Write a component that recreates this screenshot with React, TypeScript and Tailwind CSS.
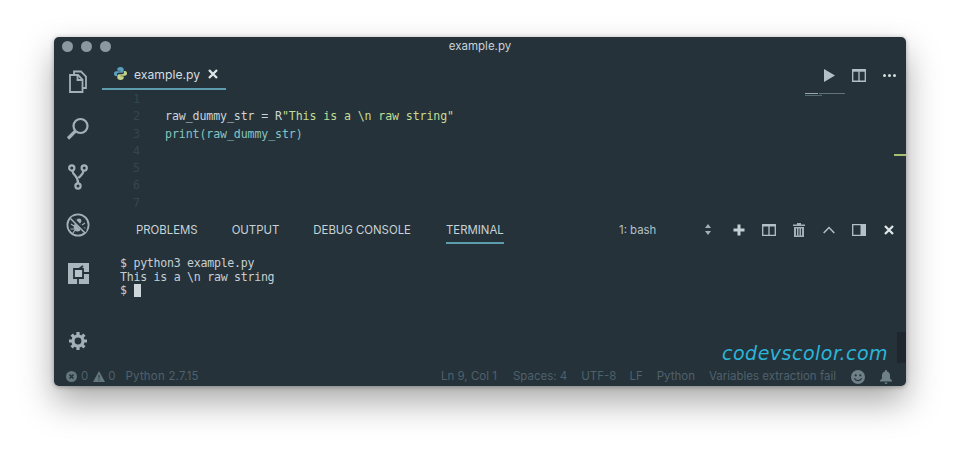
import React from 'react';

const SANS = 'font-["Inter","Noto_Sans",sans-serif]';

function Files() {
  return (
    <svg width="18" height="23" viewBox="0 0 18 23" fill="none" stroke="#a3b1b7" strokeWidth="1.800">
      <path d="M5 4V1.500h7l5 5V18h-4" />
      <path d="M1 5h8l4.500 4.500V22H1z" fill="#25323a" />
      <path d="M8.500 5v5h5" />
    </svg>
  );
}

function Search() {
  return (
    <svg width="24" height="24" viewBox="0 0 24 24" fill="none" stroke="#a3b1b7">
      <circle cx="14.500" cy="9" r="7" strokeWidth="2.200" />
      <path d="M9.500 14 2 21.500" strokeWidth="3.200" />
    </svg>
  );
}

function Branch() {
  return (
    <svg width="20" height="26" viewBox="0 0 20 26" fill="none" stroke="#a3b1b7" strokeWidth="2.200">
      <circle cx="3.800" cy="4" r="2.600" />
      <circle cx="16.200" cy="4" r="2.600" />
      <circle cx="10" cy="22" r="2.600" />
      <path d="M4.500 7c.5 5 5.500 4 5.500 12M15.500 7c-.5 4-3.500 5-5 7" />
    </svg>
  );
}

function Bug() {
  return (
    <svg width="24" height="24" viewBox="0 0 24 24" fill="none" stroke="#a3b1b7">
      <circle cx="12" cy="12" r="10.600" strokeWidth="1.800" />
      <ellipse cx="11.500" cy="14" rx="3.800" ry="4.500" fill="#a3b1b7" stroke="none" />
      <circle cx="13" cy="8" r="2.400" fill="#a3b1b7" stroke="none" />
      <path d="M5 11l3 2M4.500 16H8M7 20l2-3M19 10l-3 2M19.500 15H16M9 6l1.500 2" strokeWidth="1.200" />
      <path d="M5.500 4.500l14 14.500" stroke="#25323a" strokeWidth="3.400" />
      <path d="M4.500 5.500l14.500 14.500" strokeWidth="1.600" />
    </svg>
  );
}

function Extensions() {
  return (
    <svg width="21" height="21" viewBox="0 0 21 21">
      <path d="M0 0h21v21H0z" fill="#a9b6bb" />
      <path d="M6 6h9v9H6z" fill="#b7c3c7" stroke="#25323a" strokeWidth="1.800" />
      <path d="M15 10h6M10 15v6M11 6l4-3" stroke="#25323a" strokeWidth="1.800" fill="none" />
    </svg>
  );
}

function Gear() {
  return (
    <svg width="20" height="20" viewBox="0 0 20 20" fill="none" stroke="#a3b1b7">
      <circle cx="10" cy="10" r="5" strokeWidth="3.200" />
      <path
        d="M10 1v3M10 16v3M1 10h3M16 10h3M3.600 3.600l2.200 2.200M14.200 14.200l2.200 2.200M3.600 16.400l2.200-2.200M14.200 5.800l2.200-2.200"
        strokeWidth="3.200"
      />
    </svg>
  );
}

function PythonLogo() {
  return (
    <svg className="shrink-0" width="13" height="13" viewBox="0 0 14 14">
      <path d="M7 0C4.500 0 3.600 1 3.600 2.400V4H7v.7H2.200C.8 4.700 0 5.700 0 7.200c0 1.600.8 2.600 2 2.600h1.200V8.300C3.200 7 4.200 6.300 5.300 6.300h3.300c1 0 1.800-.8 1.800-1.800V2.400C10.400 1 9.200 0 7 0z" fill="#5a9fbf" />
      <path d="M7 14c2.500 0 3.400-1 3.400-2.400V10H7v-.7h4.800c1.400 0 2.200-1 2.200-2.500 0-1.600-.8-2.600-2-2.600h-1.200v1.500c0 1.300-1 2-2.100 2H5.400c-1 0-1.800.8-1.800 1.800v2.100C3.600 13 4.800 14 7 14z" fill="#c5d28a" />
    </svg>
  );
}

function SplitIcon({ h = 12 }: { h?: number }) {
  return (
    <svg className="shrink-0" width="14" height={h} viewBox="0 0 14 12" preserveAspectRatio="none" fill="none" stroke="#b4c0c5">
      <path d="M.7.7h12.600v10.600H.7zM7 2v9.500" strokeWidth="1.300" />
      <path d="M.7 1.500h12.600" strokeWidth="2" />
    </svg>
  );
}

function Plus() {
  return (
    <svg width="12" height="12" viewBox="0 0 12 12" stroke="#c5d0d4" strokeWidth="3">
      <path d="M6 .5v11M.5 6h11" />
    </svg>
  );
}

function Trash() {
  return (
    <svg width="12" height="14" viewBox="0 0 12 14" fill="#a3b1b7">
      <path d="M4 0h4v1.500h4V3H0V1.500h4zM1 4h10v10H1z" />
      <path d="M3.500 5.500v7M6 5.500v7M8.500 5.500v7" stroke="#25323a" />
    </svg>
  );
}

function Chevron() {
  return (
    <svg width="12" height="8" viewBox="0 0 12 8" fill="none" stroke="#b4c0c5" strokeWidth="1.500">
      <path d="M.7 7 6 1.500 11.300 7" />
    </svg>
  );
}

function PanelIcon() {
  return (
    <svg width="14" height="12" viewBox="0 0 14 12">
      <path d="M.7.7h12.600v10.600H.7z" fill="none" stroke="#b4c0c5" strokeWidth="1.300" />
      <path d="M8.500 0H14v12H8.500z" fill="#b4c0c5" />
    </svg>
  );
}

function Close() {
  return (
    <svg className="shrink-0" width="10" height="10" viewBox="0 0 10 10" stroke="#dfe6e8" strokeWidth="2.300">
      <path d="M1 1l8 8M9 1l-8 8" />
    </svg>
  );
}

function ErrorIcon() {
  return (
    <svg width="11" height="11" viewBox="0 0 11 11">
      <circle cx="5.500" cy="5.500" r="5.500" fill="#64767e" />
      <path d="M3.500 3.500l4 4M7.500 3.500l-4 4" stroke="#25323a" strokeWidth="1.500" />
    </svg>
  );
}

function WarnIcon() {
  return (
    <svg width="12" height="11" viewBox="0 0 12 11">
      <path d="M6 0l6 11H0z" fill="#64767e" />
      <path d="M6 4v3.500M6 8.500v1.200" stroke="#25323a" />
    </svg>
  );
}

function Smile() {
  return (
    <svg width="14" height="14" viewBox="0 0 14 14">
      <circle cx="7" cy="7" r="7" fill="#6f8088" />
      <circle cx="4.700" cy="5.300" r="1.100" fill="#25323a" />
      <circle cx="9.300" cy="5.300" r="1.100" fill="#25323a" />
      <path d="M3.300 8.300c1.500 3 5.900 3 7.400 0" fill="none" stroke="#25323a" strokeWidth="1.200" />
    </svg>
  );
}

function Bell() {
  return (
    <svg width="12" height="14" viewBox="0 0 12 14" fill="#6f8088">
      <path d="M6 0c.6 0 1 .4 1 1v.6c2 .5 3 2 3 4v3l2 2v.9H0v-.9l2-2v-3c0-2 1-3.500 3-4V1c0-.6.4-1 1-1zM4.500 12.500h3C7.500 13.400 6.800 14 6 14s-1.500-.6-1.500-1.500z" />
    </svg>
  );
}

const ACTIVITY = [Files, Search, Branch, Bug, Extensions];
const PANEL_TABS = [
  { label: 'PROBLEMS', gap: 'mr-[34px]' },
  { label: 'OUTPUT', gap: 'mr-[34px]' },
  { label: 'DEBUG CONSOLE', gap: 'mr-[35px]' },
];

export default function App() {
  return (
    <div className="w-[960px] h-[457px] overflow-hidden bg-white pt-[37px] pl-[54px]">
      <div className="relative w-[852px] h-[349px] flex flex-col rounded-[5px] bg-[#25323a] shadow-[0_16px_34px_rgba(0,0,0,0.34),0_1px_5px_rgba(0,0,0,0.3)]">
        {/* Title bar */}
        <div className="relative h-5 shrink-0 flex items-center justify-center">
          <div className="absolute left-[8px] top-[4px] flex gap-2">
            <span className="w-[11px] h-[11px] rounded-full bg-[#8b989e]" />
            <span className="w-[11px] h-[11px] rounded-full bg-[#8b989e]" />
            <span className="w-[11px] h-[11px] rounded-full bg-[#8b989e]" />
          </div>
          <span className={`${SANS} text-[11.500px] text-[#c9d2d6]`}>example.py</span>
        </div>

        <div className="flex flex-1 min-h-0">
          {/* Activity bar */}
          <div className="w-12 shrink-0 flex flex-col pb-[1px]">
            {ACTIVITY.map((Icon, i) => (
              <div key={i} className="h-12 flex items-center justify-center">
                <Icon />
              </div>
            ))}
            <div className="mt-auto h-12 flex items-center justify-center">
              <Gear />
            </div>
          </div>

          <div className="flex-1 min-w-0 flex flex-col">
            {/* Tabs */}
            <div className="h-[33px] shrink-0 flex items-stretch justify-between">
              <div className="w-[124px] flex items-center border-b-2 border-[#5d9cad] pl-[12px] pt-[2px]">
                <PythonLogo />
                <span className={`${SANS} ml-[7px] mt-[3px] text-[12.200px] text-[#d5dde0]`}>example.py</span>
                <span className="ml-[8px] flex"><Close /></span>
              </div>
              <div className="flex items-center gap-[17px] pr-[9px] pt-[3px]">
                <svg width="12" height="13" viewBox="0 0 12 13" fill="#b4c0c5">
                  <path d="M1 0l11 6.500L1 13z" />
                </svg>
                <SplitIcon h={13} />
                <div className="flex gap-[2px] w-[14px]">
                  <span className="w-[3px] h-[3px] rounded-full bg-[#d5dde0]" />
                  <span className="w-[3px] h-[3px] rounded-full bg-[#d5dde0]" />
                  <span className="w-[3px] h-[3px] rounded-full bg-[#d5dde0]" />
                </div>
              </div>
            </div>

            {/* Editor */}
            <div className='relative h-[121px] shrink-0 pt-[1px] font-["DejaVu_Sans_Mono",monospace] text-[11.600px] tracking-[-0.1px] leading-[17.300px]'>
              {[1, 2, 3, 4, 5, 6, 7].map((n) => (
                <div key={n} className="flex whitespace-pre">
                  <span className="w-[63px] pl-[31px] text-[#37464e]">{n}</span>
                  {n === 2 && (
                    <span className="text-[#cbd5d9]">
                      raw_dummy_str = R<span className="text-[#c3dd95]">"This is a \n raw string"</span>
                    </span>
                  )}
                  {n === 3 && <span className="text-[#86c4c2]">print(raw_dummy_str)</span>}
                </div>
              ))}
              {/* Minimap */}
              <div className="absolute left-[703px] top-[3px] flex flex-col gap-[1px]">
                <div className="flex gap-[1px]">
                  <span className="w-[13px] h-[1px] bg-[#9aa6ab]" />
                  <span className="w-[26px] h-[1px] bg-[#5f7574]" />
                </div>
                <span className="w-[17px] h-[1px] bg-[#566d6f]" />
              </div>
              <span className="absolute right-0 top-[64px] w-3 h-[2px] bg-[#a9bd70]" />
            </div>

            {/* Panel header */}
            <div className={`${SANS} h-[34px] shrink-0 flex items-stretch pl-[34px] pr-[12px] text-[11.400px] text-[#c9d2d6]`}>
              {PANEL_TABS.map((t) => (
                <div key={t.label} className={`${t.gap} pt-[11px]`}>{t.label}</div>
              ))}
              <div className="pt-[11px] border-b-2 border-[#5d9cad] mb-[1px]">TERMINAL</div>
              <div className="ml-auto flex items-center pt-[4px]">
                <div className="w-[109px] flex items-center justify-between pl-[8px] pr-[1px] text-[#b4c0c5]">
                  <span className="ml-[8px] mt-[1px]">1: bash</span>
                  <svg width="6" height="11" viewBox="0 0 6 11" fill="#a3b1b7">
                    <path d="M3 0l3 4H0zM3 11l3-4H0z" />
                  </svg>
                </div>
                <div className="ml-[21px] w-[12px] flex justify-center"><Plus /></div>
                <div className="ml-[17px] w-[14px] flex justify-center"><SplitIcon /></div>
                <div className="ml-[17px] w-[12px] flex justify-center"><Trash /></div>
                <div className="ml-[18px] w-[12px] flex justify-center"><Chevron /></div>
                <div className="ml-[17px] w-[14px] flex justify-center"><PanelIcon /></div>
                <div className="ml-[18px] w-[10px] flex justify-center"><Close /></div>
              </div>
            </div>

            {/* Terminal */}
            <div className='flex-1 min-h-0 pt-[12px] pl-[18px] font-["DejaVu_Sans_Mono",monospace] text-[11.600px] tracking-[-0.27px] leading-[13.500px] text-[#c5d0d4] whitespace-pre'>
              <div>$ python3 example.py</div>
              <div>This is a \n raw string</div>
              <div className="flex">
                $ <span className="w-[7px] h-[13px] ml-[1px] bg-[#cdd6da]" />
              </div>
            </div>
          </div>
        </div>

        {/* Status bar */}
        <div className={`${SANS} h-[20px] shrink-0 flex items-center pt-[1px] pl-[12px] pr-[14px] text-[11.500px] text-[#4f616a]`}>
          <ErrorIcon />
          <span className="ml-[4px]">0</span>
          <span className="ml-[5px] flex"><WarnIcon /></span>
          <span className="ml-[3px]">0</span>
          <span className="ml-[10px] tracking-[0.2px]">Python 2.7.15</span>
          <div className="ml-auto flex items-center">
            <span>Ln 9, Col 1</span>
            <span className="ml-[16px]">Spaces: 4</span>
            <span className="ml-[14px]">UTF-8</span>
            <span className="ml-[13px]">LF</span>
            <span className="ml-[14px]">Python</span>
            <span className="ml-[14px]">Variables extraction fail</span>
            <span className="ml-[15px] flex"><Smile /></span>
            <span className="ml-[15px] flex"><Bell /></span>
          </div>
        </div>

        {/* Scrollbar thumb + watermark sit over the panel */}
        <span className="absolute right-0 top-[295px] w-[9px] h-[31px] bg-[#1d272d]" />
        <span className='absolute left-[668px] top-[303px] font-["DejaVu_Sans",sans-serif] italic text-[19px] tracking-[0.5px] leading-[26px] text-[#2bb5d8]'>
          codevscolor.com
        </span>
      </div>
    </div>
  );
}
